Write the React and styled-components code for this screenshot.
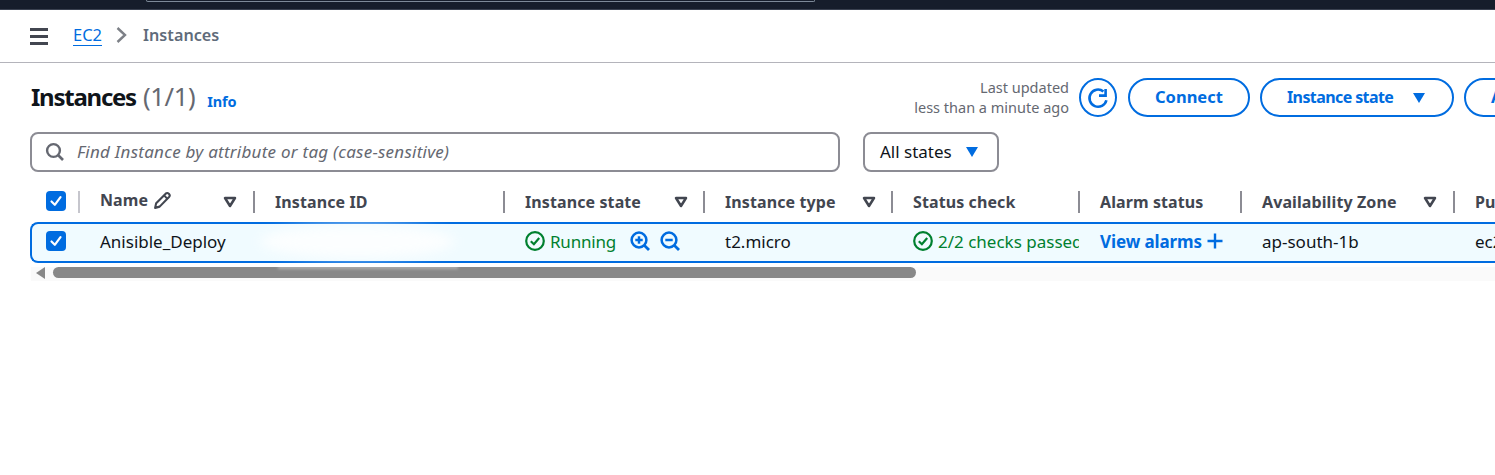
import React from "react";
import styled, { createGlobalStyle } from "styled-components";

const GlobalStyle = createGlobalStyle`
  html, body {
    margin: 0;
    background: #fff;
    overflow: hidden;
  }
  body {
    font-family: "Noto Sans", "Open Sans", sans-serif;
    font-size: 16px;
    color: #0f141a;
  }
`;

const Page = styled.div`
  width: 1495px;
  height: 475px;
  overflow: hidden;
`;

const TopBar = styled.div`
  height: 9px;
  background: #161d2b;
  padding-left: 146px;
  border-bottom: 1px solid #3a4150;
`;

const TopSearch = styled.div`
  width: 669px;
  height: 2px;
  box-sizing: border-box;
  border: 1px solid #7d8998;
  border-top: 0;
  border-radius: 0 0 6px 6px;
`;

const Crumbs = styled.div`
  height: 50px;
  display: flex;
  align-items: center;
  padding: 0 0 2px 30px;
  border-bottom: 1px solid #b4b4bb;
`;

const Menu = styled.div`
  width: 18px;
  display: flex;
  flex-direction: column;
  gap: 4px;
  margin: 2px 25px 0 0;
  span {
    height: 3px;
    background: #424650;
  }
`;

const CrumbLink = styled.a`
  color: #006ce0;
  font-size: 16.5px;
  line-height: 20px;
  border-bottom: 1px solid #006ce0;
`;

const CrumbCurrent = styled.span`
  color: #5f6b7a;
  font-size: 16.2px;
  font-weight: 600;
`;

const Header = styled.div`
  height: 69px;
  display: flex;
  align-items: center;
  padding-left: 31px;
  box-sizing: border-box;
`;

const Title = styled.h1`
  margin: 0 0 4px;
  font-size: 24px;
  font-weight: 700;
  letter-spacing: -1.25px;
  color: #0f141a;
  span {
    font-size: 25.5px;
    font-weight: 400;
    letter-spacing: -0.3px;
    margin-left: 2px;
    color: #656871;
  }
`;

const InfoLink = styled.a`
  color: #006ce0;
  font-size: 14.5px;
  font-weight: 700;
  margin: 6px 0 0 12px;
  letter-spacing: -0.2px;
`;

const Actions = styled.div`
  margin: 0 -69px 0 auto;
  display: flex;
  align-items: center;
  gap: 10px;
`;

const Updated = styled.div`
  color: #656871;
  font-size: 14.5px;
  line-height: 20px;
  text-align: right;
  margin-top: -2px;
`;

const RefreshButton = styled.div`
  width: 38px;
  height: 39px;
  margin-right: 1px;
  box-sizing: border-box;
  border: 2px solid #006ce0;
  border-radius: 50%;
  display: flex;
  align-items: center;
  justify-content: center;
`;

const PillButton = styled.div`
  height: 39px;
  width: ${(p) => p.$width}px;
  box-sizing: border-box;
  border: 2px solid #006ce0;
  border-radius: 20px;
  display: flex;
  align-items: center;
  padding: 0 0 2px 25px;
  gap: 20px;
  color: #006ce0;
  font-size: ${(p) => p.$size || 16.5}px;
  font-weight: 700;
  letter-spacing: ${(p) => p.$spacing || 0}px;
  white-space: nowrap;
  flex-shrink: 0;
`;

const Caret = styled.span`
  width: 0;
  height: 0;
  margin-top: 2px;
  border-left: 6.5px solid transparent;
  border-right: 6.5px solid transparent;
  border-top: 10px solid #006ce0;
`;

const FilterRow = styled.div`
  display: flex;
  padding-left: 30px;
  gap: 23px;
`;

const SearchBox = styled.div`
  width: 810px;
  height: 40px;
  box-sizing: border-box;
  border: 2px solid #8c8c94;
  border-radius: 8px;
  display: flex;
  align-items: center;
  padding: 0 0 2px 13px;
  gap: 12px;
  color: #656871;
  font-size: 17px;
  font-style: italic;
  letter-spacing: 0.25px;
`;

const StateSelect = styled.div`
  width: 136px;
  height: 40px;
  box-sizing: border-box;
  border: 2px solid #8c8c94;
  border-radius: 8px;
  display: flex;
  align-items: center;
  padding: 0 0 2px 15px;
  gap: 14px;
  font-size: 17px;
`;

const columns = "49px 175px 250px 200px 188px 187px 162px 213px 60px";

const HeaderRow = styled.div`
  display: grid;
  grid-template-columns: ${columns};
  margin: 18px 0 0 31px;
  height: 32px;
`;

const HeadCell = styled.div`
  display: flex;
  align-items: center;
  justify-content: space-between;
  padding: 0 ${(p) => p.$right || 0}px 9px 20px;
  box-sizing: border-box;
  font-size: 16px;
  font-weight: 700;
  color: #424650;
  letter-spacing: 0.1px;
  white-space: nowrap;
  position: relative;
  &::after {
    content: "";
    display: ${(p) => (p.$last ? "none" : "block")};
    position: absolute;
    right: 0;
    top: 1px;
    height: 22px;
    width: 2px;
    background: #8c8c94;
  }
`;

const NameLabel = styled.span`
  display: flex;
  align-items: center;
  gap: 5px;
  margin-top: -3px;
`;

const CheckCell = styled.div`
  display: flex;
  align-items: center;
  padding: 0 0 ${(p) => (p.$head ? 10 : 3)}px ${(p) => (p.$head ? 15 : 14)}px;
  position: relative;
  &::after {
    content: "";
    display: ${(p) => (p.$head ? "block" : "none")};
    position: absolute;
    right: 0;
    top: 1px;
    height: 22px;
    width: 2px;
    background: #c6c6cd;
  }
`;

const Check = styled.div`
  width: 20px;
  height: 20px;
  border-radius: 4px;
  background: #006ce0;
  display: flex;
  align-items: center;
  justify-content: center;
`;

const SelectedRow = styled.div`
  display: grid;
  grid-template-columns: ${columns};
  position: relative;
  margin-left: 30px;
  width: 1500px;
  height: 41px;
  box-sizing: border-box;
  border: 2px solid #006ce0;
  border-right: 0;
  border-radius: 8px 0 0 8px;
  background: #f0fbff;
`;

const Cell = styled.div`
  display: flex;
  align-items: center;
  padding: 0 0 3px 19px;
  font-size: 17px;
  color: ${(p) => p.$color || "#0f141a"};
  font-weight: ${(p) => p.$weight || 400};
  letter-spacing: ${(p) => p.$spacing || 0}px;
  white-space: nowrap;
  overflow: hidden;
  gap: 5px;
`;

const StatusText = styled.span`
  width: 141px;
  overflow: hidden;
`;

const ZoomIcons = styled.span`
  display: flex;
  gap: 10px;
  margin-left: 9px;
`;

const ScrollTrack = styled.div`
  display: flex;
  align-items: flex-start;
  margin: 4px 0 0 31px;
  height: 14px;
  background: #fafafa;
`;

const ScrollArrow = styled.span`
  width: 0;
  height: 0;
  margin-left: 5px;
  border-top: 6px solid transparent;
  border-bottom: 6px solid transparent;
  border-right: 9px solid #888;
`;

const ScrollThumb = styled.div`
  width: 863px;
  height: 11px;
  margin-left: 8px;
  border-radius: 6px;
  background: #888;
  position: relative;
  overflow: hidden;
`;

// white smear left over from masking the instance id
const RowSmear = styled.div`
  position: absolute;
  left: 228px;
  top: 1px;
  width: 195px;
  height: 33px;
  background: #fff;
  border-radius: 50%;
  filter: blur(6px);
  opacity: 0.8;
`;

const ThumbSmear = styled.div`
  position: absolute;
  left: 225px;
  top: -1px;
  width: 180px;
  height: 3px;
  background: #fff;
  filter: blur(1.5px);
  opacity: 0.35;
`;

const CheckMark = () => (
  <svg width="14" height="14" viewBox="0 0 14 14" fill="none">
    <path d="M2.5 7.5 L5.8 10.8 L11.5 3.2" stroke="#fff" strokeWidth="2.2" strokeLinecap="round" strokeLinejoin="round" />
  </svg>
);

const Chevron = () => (
  <svg width="16" height="18" viewBox="0 0 16 18" fill="none" style={{ margin: "0 13px 0 12px" }}>
    <path d="M3.5 2 L11 9 L3.5 16" stroke="#7d8087" strokeWidth="2.4" />
  </svg>
);

const Magnifier = () => (
  <svg width="20" height="20" viewBox="0 0 20 20" fill="none" style={{ marginTop: 2 }}>
    <circle cx="8.5" cy="8.5" r="6.4" stroke="#656871" strokeWidth="2.4" />
    <path d="M13 13 L18 18" stroke="#656871" strokeWidth="2.6" />
  </svg>
);

const SortCaret = () => (
  <svg width="14" height="12" viewBox="0 0 14 12" fill="none">
    <path d="M2 2 H12 L7 10 Z" stroke="#424650" strokeWidth="2.5" strokeLinejoin="round" />
  </svg>
);

const Pencil = () => (
  <svg width="19" height="19" viewBox="0 0 18 18" fill="none">
    <path d="M2 16 L3 11.5 L12 2.5 Q13.5 1.2 15 2.6 Q16.6 4.2 15.2 5.7 L6.3 14.8 Z" stroke="#424650" strokeWidth="2" strokeLinejoin="round" />
    <path d="M10.5 4.2 L13.6 7.3" stroke="#424650" strokeWidth="1.8" />
  </svg>
);

const StatusOk = () => (
  <svg width="20" height="20" viewBox="0 0 20 20" fill="none">
    <circle cx="10" cy="10" r="8.8" stroke="#00802f" strokeWidth="2.2" />
    <path d="M5.8 10.2 L8.9 13.2 L14.2 7" stroke="#00802f" strokeWidth="2.2" />
  </svg>
);

const ZoomGlass = ({ plus }) => (
  <svg width="20" height="20" viewBox="0 0 20 20" fill="none">
    <circle cx="9" cy="9" r="7.4" stroke="#006ce0" strokeWidth="2.5" />
    <path d="M14.2 14.2 L19 19" stroke="#006ce0" strokeWidth="2.8" />
    <path d="M5.3 9 H12.7" stroke="#006ce0" strokeWidth="2.5" />
    {plus && <path d="M9 5.3 V12.7" stroke="#006ce0" strokeWidth="2.5" />}
  </svg>
);

const Refresh = () => (
  <svg width="24" height="24" viewBox="0 0 24 24" fill="none">
    <path d="M20.4 14.2 A8.6 8.6 0 1 1 17.4 5.4" stroke="#006ce0" strokeWidth="2.6" />
    <path d="M19.6 3 V9.6 H13" stroke="#006ce0" strokeWidth="2.6" />
  </svg>
);

const PlusSign = () => (
  <svg width="16" height="16" viewBox="0 0 16 16" fill="none">
    <path d="M8 0.5 V15.5 M0.5 8 H15.5" stroke="#006ce0" strokeWidth="2.4" />
  </svg>
);

export default function App() {
  return (
    <Page>
      <GlobalStyle />
      <TopBar>
        <TopSearch />
      </TopBar>
      <Crumbs>
        <Menu>
          <span />
          <span />
          <span />
        </Menu>
        <CrumbLink>EC2</CrumbLink>
        <Chevron />
        <CrumbCurrent>Instances</CrumbCurrent>
      </Crumbs>
      <Header>
        <Title>
          Instances <span>(1/1)</span>
        </Title>
        <InfoLink>Info</InfoLink>
        <Actions>
          <Updated>
            Last updated
            <br />
            less than a minute ago
          </Updated>
          <RefreshButton>
            <Refresh />
          </RefreshButton>
          <PillButton $width={122}>Connect</PillButton>
          <PillButton $width={194} $size={16} $spacing={-0.6}>
            Instance state <Caret />
          </PillButton>
          <PillButton $width={100}>Actions</PillButton>
        </Actions>
      </Header>
      <FilterRow>
        <SearchBox>
          <Magnifier />
          Find Instance by attribute or tag (case-sensitive)
        </SearchBox>
        <StateSelect>
          All states <Caret />
        </StateSelect>
      </FilterRow>
      <HeaderRow>
        <CheckCell $head>
          <Check>
            <CheckMark />
          </Check>
        </CheckCell>
        <HeadCell $right={18}>
          <NameLabel>
            Name <Pencil />
          </NameLabel>
          <SortCaret />
        </HeadCell>
        <HeadCell>Instance ID</HeadCell>
        <HeadCell $right={17}>
          Instance state <SortCaret />
        </HeadCell>
        <HeadCell $right={17}>
          Instance type <SortCaret />
        </HeadCell>
        <HeadCell>Status check</HeadCell>
        <HeadCell>Alarm status</HeadCell>
        <HeadCell $right={18}>
          Availability Zone <SortCaret />
        </HeadCell>
        <HeadCell $last>Public IPv4 DNS</HeadCell>
      </HeaderRow>
      <SelectedRow>
        <CheckCell>
          <Check>
            <CheckMark />
          </Check>
        </CheckCell>
        <Cell>Anisible_Deploy</Cell>
        <Cell />
        <Cell $color="#00802f" $spacing={-0.2}>
          <StatusOk />
          Running
          <ZoomIcons>
            <ZoomGlass plus />
            <ZoomGlass />
          </ZoomIcons>
        </Cell>
        <Cell>t2.micro</Cell>
        <Cell $color="#00802f">
          <StatusOk />
          <StatusText>2/2 checks passed</StatusText>
        </Cell>
        <Cell $color="#006ce0" $weight={700} $spacing={-0.1}>
          View alarms <PlusSign />
        </Cell>
        <Cell>ap-south-1b</Cell>
        <Cell>ec2-13-233</Cell>
        <RowSmear />
      </SelectedRow>
      <ScrollTrack>
        <ScrollArrow />
        <ScrollThumb>
          <ThumbSmear />
        </ScrollThumb>
      </ScrollTrack>
    </Page>
  );
}
